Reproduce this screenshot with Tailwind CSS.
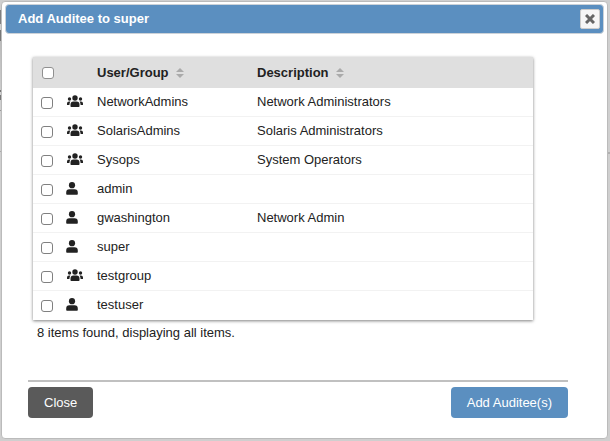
<!DOCTYPE html>
<html lang="en">
<head>
    <meta charset="UTF-8">
    <meta name="viewport" content="width=device-width, initial-scale=1.0">
    <title>Add Auditee to super</title>
    <script src="https://cdn.jsdelivr.net/npm/@tailwindcss/browser@4"></script>
</head>
<body class="min-h-screen flex bg-[#cfcfcf] pt-px pb-[2px] font-['Liberation_Sans',Arial,sans-serif] text-[13px] leading-4 text-[#222]">
    <!-- Icons -->
    <svg class="hidden">
        <symbol id="icon-group" viewBox="0 0 16 12">
            <circle cx="8" cy="3" r="2.700"/>
            <circle cx="2.500" cy="4" r="1.700"/>
            <circle cx="13.500" cy="4" r="1.700"/>
            <path d="M3.500 11.200V9.600a3 3 0 0 1 3-3h3a3 3 0 0 1 3 3v1.600q0 .8-.8.8H4.300q-.8 0-.8-.8zM0 10V8.400a2 2 0 0 1 2-2h1.400Q2.500 7.600 2.400 10zM16 10V8.400a2 2 0 0 0-2-2h-1.400q.9 1.200 1 3.600z"/>
        </symbol>
        <symbol id="icon-user" viewBox="0 0 12 13">
            <circle cx="6" cy="3.200" r="3.100"/>
            <path d="M.2 12V10.400A3.200 3.200 0 0 1 3.400 7.200h5.200a3.200 3.200 0 0 1 3.200 3.200V12q0 .8-.8.8H1q-.8 0-.8-.8z"/>
        </symbol>
        <symbol id="icon-sort" viewBox="0 0 8 10">
            <path d="M4 0l4 4H0zM4 10L0 6h8z"/>
        </symbol>
    </svg>

    <!-- Page behind the dialog -->
    <div class="w-px flex flex-col pt-[9px]" aria-hidden="true">
        <div class="h-[14px] bg-[#808080]"></div>
        <div class="h-[11px] mt-[6px] bg-[#777]"></div>
        <div class="h-[49px] bg-linear-to-b from-[#bbb] to-[#ccc]"></div>
        <div class="h-0.5 bg-[#777]"></div>
        <div class="h-[5px] mt-[3px] bg-[#777]"></div>
        <div class="h-px mt-[10px] bg-[#999]"></div>
        <div class="h-px mt-10 bg-[#aaa]"></div>
    </div>

    <div role="dialog" aria-labelledby="dialog-title" class="flex-1 flex flex-col bg-white border border-[#bbb] rounded pt-0.5 px-[3px]">
        <!-- Title bar -->
        <header class="flex items-center justify-between h-[30px] shrink-0 bg-[#5b8fc0] border border-[#ccd2d8] rounded-sm pl-3 pr-[3px]">
            <h1 id="dialog-title" class="font-bold text-white">Add Auditee to super</h1>
            <button type="button" aria-label="Close dialog" class="flex items-center justify-center size-5 bg-[#f6f6f6] border border-[#ccc] rounded-xs text-[#666]">
                <svg class="size-[10px]" viewBox="0 0 10 10" stroke="currentColor" stroke-width="3"><path d="M1 1l8 8M9 1L1 9"/></svg>
            </button>
        </header>

        <main class="pt-[23px] pl-7 pr-[71px]">
            <table class="w-full table-fixed border-separate border-spacing-0 bg-white shadow-[0_1px_3px_rgba(0,0,0,0.5)]">
                <thead>
                    <tr class="h-[31px] bg-[#dfdfdf] text-left">
                        <th class="w-[33px] pl-[9px]"><input type="checkbox" aria-label="Select all" class="block appearance-none size-3 bg-white border border-[#909090] rounded-[3px]"></th>
                        <th class="w-[31px]"></th>
                        <th class="w-40"><span class="flex items-center gap-[7px]">User/Group <svg class="w-2 h-[10px] fill-[#aaa]"><use href="#icon-sort"/></svg></span></th>
                        <th><span class="flex items-center gap-[7px]">Description <svg class="w-2 h-[10px] fill-[#aaa]"><use href="#icon-sort"/></svg></span></th>
                    </tr>
                </thead>
                <tbody id="auditees" class="[&_td]:border-b [&_td]:border-[#f2f2f2] [&_tr:last-child_td]:border-transparent"></tbody>
            </table>
            <p class="pt-[5px] pl-1">8 items found, displaying all items.</p>
        </main>

        <!-- Buttons -->
        <footer class="mt-[39px] ml-[23px] mr-9 border-t-2 border-[#c0c0c0] pt-[5px] pb-[18px] flex justify-between">
            <button type="button" class="h-[31px] px-4 rounded bg-[#5a5a5a] text-white">Close</button>
            <button type="button" class="h-[31px] px-4 rounded bg-[#5b8fc0] text-white">Add Auditee(s)</button>
        </footer>
    </div>

    <div class="w-0.5 pt-[151px]" aria-hidden="true">
        <div class="h-0.5 bg-[#b0b0b0]"></div>
    </div>

    <script>
        var auditees = [
            { name: 'NetworkAdmins', group: true, description: 'Network Administrators' },
            { name: 'SolarisAdmins', group: true, description: 'Solaris Administrators' },
            { name: 'Sysops', group: true, description: 'System Operators' },
            { name: 'admin', group: false, description: '' },
            { name: 'gwashington', group: false, description: 'Network Admin' },
            { name: 'super', group: false, description: '' },
            { name: 'testgroup', group: true, description: '' },
            { name: 'testuser', group: false, description: '' }
        ];
        var groupIcon = '<svg class="w-4 h-3 ml-px fill-[#222]"><use href="#icon-group"/></svg>';
        var userIcon = '<svg class="w-3 h-[13px] fill-[#222]"><use href="#icon-user"/></svg>';

        document.getElementById('auditees').innerHTML = auditees.map(function (a) {
            return '<tr class="h-[29px]">' +
                '<td class="pl-2 pt-0.5"><input type="checkbox" id="cb-' + a.name + '" class="block appearance-none size-3 bg-white border border-[#808080] rounded-[3px]"></td>' +
                '<td class="pb-0.5">' + (a.group ? groupIcon : userIcon) + '</td>' +
                '<td class="pb-px"><label for="cb-' + a.name + '">' + a.name + '</label></td>' +
                '<td class="pb-px">' + a.description + '</td></tr>';
        }).join('');
    </script>
</body>
</html>
